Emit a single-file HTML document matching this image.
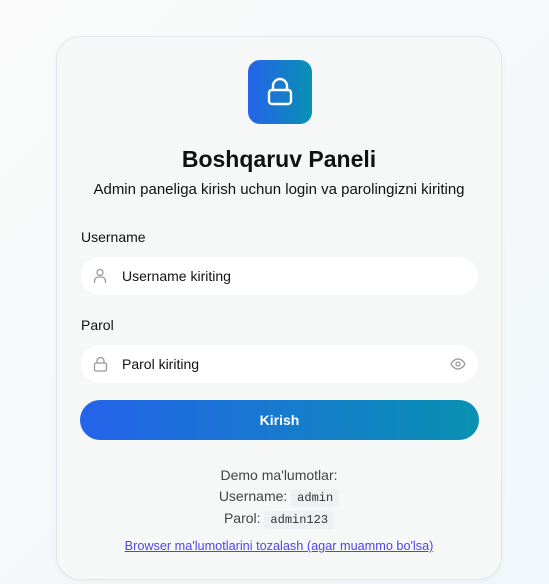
<!DOCTYPE html><html><head><style>
body{margin:0;width:549px;height:584px;background:linear-gradient(135deg,#fafafa,#f1f7fb);font-family:"Liberation Sans",sans-serif;position:relative;overflow:hidden}
.card{position:absolute;left:56px;top:36px;width:444px;height:542px;background:#f6f7f7;border:1px solid #e3e6ea;border-radius:24px;box-shadow:0 2px 6px rgba(0,0,0,.04)}
.abs{position:absolute}
.logo{left:191px;top:23px;width:64px;height:64px;border-radius:12px;background:linear-gradient(90deg,#2563eb,#0891b2);display:flex;align-items:center;justify-content:center}
.c{left:0;width:444px;text-align:center}
.lbl{left:24px;font-size:14px;color:#111}
.inp{left:24px;width:397px;height:38px;background:#fff;border-radius:19px}
.ph{position:absolute;left:41px;top:11px;font-size:14px;color:#111}
.btn{left:23px;top:363px;width:399px;height:40px;border-radius:20px;background:linear-gradient(90deg,#2563eb,#0891b2);color:#fff;font-weight:bold;font-size:14px;text-align:center;line-height:40px}
code{font-family:"Liberation Mono",monospace;background:#eef0f2;padding:2px 6px;border-radius:3px;font-size:12px;color:#333}
</style></head><body>
<div class="card">
<div class="abs logo"><svg width="28" height="30" viewBox="0 0 28 30" fill="none" stroke="#fff" stroke-width="2.4"><path d="M7 13V9a7 7 0 0 1 14 0v4"/><rect x="3" y="13" width="22" height="14" rx="3"/></svg></div>
<div class="abs c" style="top:109px;font-size:23px;font-weight:bold;color:#111">Boshqaruv Paneli</div>
<div class="abs c" style="top:144px;font-size:15px;color:#111">Admin paneliga kirish uchun login va parolingizni kiriting</div>
<div class="abs lbl" style="top:192px">Username</div>
<div class="abs inp" style="top:220px"><svg class="abs" style="left:12px;top:11px" width="14" height="16" viewBox="0 0 14 16" fill="none" stroke="#999" stroke-width="1.3"><circle cx="7" cy="4.5" r="3"/><path d="M1.5 15v-2a4 4 0 0 1 4-4h3a4 4 0 0 1 4 4v2"/></svg><span class="ph">Username kiriting</span></div>
<div class="abs lbl" style="top:280px">Parol</div>
<div class="abs inp" style="top:308px"><svg class="abs" style="left:12px;top:11px" width="15" height="16" viewBox="0 0 15 16" fill="none" stroke="#999" stroke-width="1.3"><path d="M4 7V5a3.5 3.5 0 0 1 7 0v2"/><rect x="1.5" y="7" width="12" height="8" rx="1.5"/></svg><span class="ph">Parol kiriting</span><svg class="abs" style="left:369px;top:13px" width="16" height="12" viewBox="0 0 16 12" fill="none" stroke="#999" stroke-width="1.3"><path d="M1 6s2.5-5 7-5 7 5 7 5-2.5 5-7 5-7-5-7-5z"/><circle cx="8" cy="6" r="2"/></svg></div>
<div class="abs btn">Kirish</div>
<div class="abs c" style="top:428px;font-size:14px;color:#444;line-height:20.5px">Demo ma'lumotlar:<br>Username: <code>admin</code><br>Parol: <code>admin123</code></div>
<div class="abs c" style="top:502px;font-size:12.7px;color:#4f46e5;text-decoration:underline">Browser ma'lumotlarini tozalash (agar muammo bo'lsa)</div>
</div>
</body></html>
